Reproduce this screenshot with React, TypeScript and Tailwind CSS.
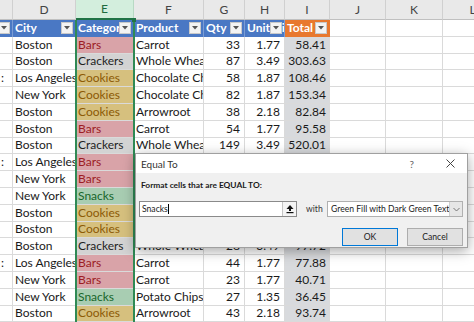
import React from "react";

type Cat = "Bars" | "Crackers" | "Cookies" | "Snacks";

type Row = {
  c?: string;
  city: string;
  cat: Cat;
  product: string;
  qty: string;
  price: string;
  total: string;
};

const ROWS: Row[] = [
  { city: "Boston", cat: "Bars", product: "Carrot", qty: "33", price: "1.77", total: "58.41" },
  { city: "Boston", cat: "Crackers", product: "Whole Wheat", qty: "87", price: "3.49", total: "303.63" },
  { c: ":", city: "Los Angeles", cat: "Cookies", product: "Chocolate Chip", qty: "58", price: "1.87", total: "108.46" },
  { city: "New York", cat: "Cookies", product: "Chocolate Chip", qty: "82", price: "1.87", total: "153.34" },
  { city: "Boston", cat: "Cookies", product: "Arrowroot", qty: "38", price: "2.18", total: "82.84" },
  { city: "Boston", cat: "Bars", product: "Carrot", qty: "54", price: "1.77", total: "95.58" },
  { city: "Boston", cat: "Crackers", product: "Whole Wheat", qty: "149", price: "3.49", total: "520.01" },
  { c: ":", city: "Los Angeles", cat: "Bars", product: "Carrot", qty: "51", price: "1.77", total: "90.27" },
  { city: "New York", cat: "Bars", product: "Carrot", qty: "100", price: "1.77", total: "177.00" },
  { city: "New York", cat: "Snacks", product: "Potato Chips", qty: "28", price: "1.35", total: "37.80" },
  { city: "Boston", cat: "Cookies", product: "Arrowroot", qty: "36", price: "2.18", total: "78.48" },
  { city: "Boston", cat: "Cookies", product: "Chocolate Chip", qty: "31", price: "1.87", total: "57.97" },
  { city: "Boston", cat: "Crackers", product: "Whole Wheat", qty: "28", price: "3.49", total: "97.72" },
  { c: ":", city: "Los Angeles", cat: "Bars", product: "Carrot", qty: "44", price: "1.77", total: "77.88" },
  { city: "New York", cat: "Bars", product: "Carrot", qty: "23", price: "1.77", total: "40.71" },
  { city: "New York", cat: "Snacks", product: "Potato Chips", qty: "27", price: "1.35", total: "36.45" },
  { city: "Boston", cat: "Cookies", product: "Arrowroot", qty: "43", price: "2.18", total: "93.74" },
];

const CAT_STYLE: Record<Cat, string> = {
  Bars: "bg-[#d9a3a8] text-[#9c1c24]",
  Crackers: "bg-[#d3d3d3] text-[#1f1f1f]",
  Cookies: "bg-[#d6c07e] text-[#8c5a06]",
  Snacks: "bg-[#a8cdb2] text-[#17662b]",
};

const FilterBtn = () => (
  <span className="absolute right-[2px] top-[2px] w-[12px] h-[12px] bg-[#f3f3f3] border border-[#c9c9c9] flex items-center justify-center">
    <svg width="6" height="4" viewBox="0 0 6 4">
      <path d="M0 0 L6 0 L3 3.5 Z" fill="#555" />
    </svg>
  </span>
);

const Letter = ({ w, label, active }: { w: string; label: string; active?: boolean }) => (
  <div
    className={`${w} shrink-0 h-full flex items-center justify-center border-r ${
      active
        ? "bg-[#d3eedd] text-[#1e6b3e] border-[#b8d9c4] border-b-2 border-b-[#217346]"
        : "bg-[#e9e9e9] text-[#444] border-[#d0d0d0] border-b border-b-[#c0c0c0]"
    }`}
  >
    {label}
  </div>
);

const cell = "shrink-0 h-full flex items-center overflow-hidden whitespace-nowrap border-r border-b border-[#dadada]";

const HeadCell = ({ w, label, orange }: { w: string; label: string; orange?: boolean }) => (
  <div
    className={`${w} relative shrink-0 h-full flex items-center overflow-hidden whitespace-nowrap pl-[2px] font-bold text-white border-r ${
      orange ? "bg-[#e8782e] border-[#e8782e]" : "bg-[#4a78c4] border-[#7a9cd4]"
    }`}
  >
    {label}
    <FilterBtn />
  </div>
);

const DataRow = ({ r }: { r: Row }) => (
  <div className="flex h-[16.8px]">
    <div className={`${cell} w-[13px] pl-[1px]`}>{r.c}</div>
    <div className={`${cell} w-[63px] pl-[2px]`}>{r.city}</div>
    <div className={`${cell} w-[58px] pl-[2px] ${CAT_STYLE[r.cat]}`}>{r.cat}</div>
    <div className={`${cell} w-[70px] pl-[2px]`}>{r.product}</div>
    <div className={`${cell} w-[41px] justify-end pr-[4px]`}>{r.qty}</div>
    <div className={`${cell} w-[40px] justify-end pr-[4px]`}>{r.price}</div>
    <div className={`${cell} w-[45px] justify-end pr-[3px] bg-[#d8dadd]`}>{r.total}</div>
    <div className={`${cell} w-[56px]`} />
    <div className={`${cell} w-[57px]`} />
    <div className={`${cell} w-[60px]`} />
  </div>
);

const Dialog = () => (
  <div className="absolute left-[135px] top-[153px] w-[333px] h-[95px] bg-[#f0f0f0] border border-[#a0a0a0] shadow-[0_3px_12px_rgba(0,0,0,0.35)] font-['Lato',sans-serif] text-[8.6px] leading-none text-[#1a1a1a]">
    <div className="h-[19px] bg-white flex items-center pl-[5px] pr-[12px]">
      <span className="text-[#333] text-[10px]">Equal To</span>
      <span className="ml-auto mr-[32px] text-[#666] text-[10px]">?</span>
      <svg width="9" height="9" viewBox="0 0 9 9">
        <path d="M0.5 0.5 L8.5 8.5 M8.5 0.5 L0.5 8.5" stroke="#444" strokeWidth="1" />
      </svg>
    </div>
    <div className="pl-[5px] pt-[8px] h-[26px] font-bold text-[8.4px]">Format cells that are EQUAL TO:</div>
    <div className="flex items-center pl-[3px] pr-[4px] mt-[2px]">
      <div className="w-[158px] h-[16px] bg-white border border-[#8a8a8a] flex items-center pl-[2px]">
        <span>Snacks</span>
        <span className="w-px h-[10px] bg-black" />
        <span className="ml-auto w-[14px] h-full border-l border-[#c4c4c4] bg-[#f4f4f4] flex items-center justify-center">
          <svg width="8" height="10" viewBox="0 0 8 10">
            <path d="M4 1 L7.5 5 L5 5 L5 7 L3 7 L3 5 L0.5 5 Z" fill="#111" />
            <rect x="0.5" y="8" width="7" height="1.2" fill="#111" />
          </svg>
        </span>
      </div>
      <span className="ml-[9px] text-[#333]">with</span>
      <div className="ml-auto w-[136px] h-[16px] bg-white border border-[#b0b0b0] flex items-center pl-[3px]">
        <span className="whitespace-nowrap">Green Fill with Dark Green Text</span>
        <span className="ml-auto w-[15px] h-full bg-[#e6e6e6] border-l border-[#cfcfcf] flex items-center justify-center">
          <svg width="7" height="5" viewBox="0 0 7 5">
            <path d="M0.5 1 L3.5 4 L6.5 1" fill="none" stroke="#777" strokeWidth="1" />
          </svg>
        </span>
      </div>
    </div>
    <div className="flex justify-end gap-[9px] pr-[4px] mt-[11px]">
      <div className="w-[56px] h-[18px] bg-[#e1e1e1] border border-[#0078d7] flex items-center justify-center">OK</div>
      <div className="w-[56px] h-[18px] bg-[#e1e1e1] border border-[#adadad] flex items-center justify-center">Cancel</div>
    </div>
  </div>
);

export default function App() {
  return (
    <div className="relative w-[474px] h-[322px] overflow-hidden bg-white font-['Lato',sans-serif] text-[12px] leading-none text-[#1a1a1a]">
      <div className="flex h-[20px] text-[12px]">
        <Letter w="w-[13px]" label="" />
        <Letter w="w-[63px]" label="D" />
        <Letter w="w-[58px]" label="E" active />
        <Letter w="w-[70px]" label="F" />
        <Letter w="w-[41px]" label="G" />
        <Letter w="w-[40px]" label="H" />
        <Letter w="w-[45px]" label="I" />
        <Letter w="w-[56px]" label="J" />
        <Letter w="w-[57px]" label="K" />
        <Letter w="w-[60px]" label="L" />
      </div>
      <div className="flex h-[16.8px]">
        <HeadCell w="w-[13px]" label="" />
        <HeadCell w="w-[63px]" label="City" />
        <HeadCell w="w-[58px]" label="Category" />
        <HeadCell w="w-[70px]" label="Product" />
        <HeadCell w="w-[41px]" label="Qty" />
        <HeadCell w="w-[40px]" label="UnitPrice" />
        <HeadCell w="w-[45px]" label="Total" orange />
        <div className={`${cell} w-[56px]`} />
        <div className={`${cell} w-[57px]`} />
        <div className={`${cell} w-[60px]`} />
      </div>
      {ROWS.map((r, i) => (
        <DataRow key={i} r={r} />
      ))}

      {/* selection outline on column E */}
      <div className="absolute left-[75px] top-[20px] w-[60px] h-[302px] border-x-2 border-[#2f8a55] pointer-events-none" />
      <div className="absolute left-[132px] top-[18px] w-[4px] h-[4px] bg-[#217346]" />

      <Dialog />
    </div>
  );
}
